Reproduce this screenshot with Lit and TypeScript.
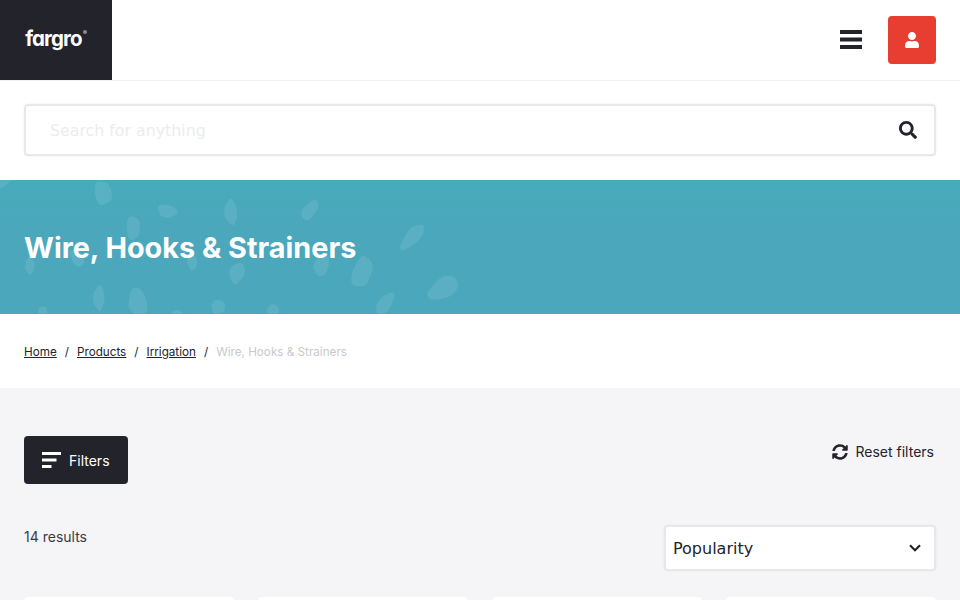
import { LitElement, html, css, svg } from "lit";
import { customElement } from "lit/decorators.js";

const blobs: [number, number, number, number, number][] = [
  [103, 193, 9, 13, -10], [167, 211, 10, 7, 15], [231, 212, 7, 13, -5], [310, 210, 7, 12, 40],
  [133, 228, 7, 13, 0], [412, 237, 7, 17, 40], [30, 265, 5, 10, 5], [77, 258, 6, 10, -30],
  [192, 262, 5, 9, -10], [237, 273, 8, 11, 15], [322, 265, 8, 12, 20], [362, 272, 10, 17, 20],
  [443, 288, 10, 18, 55], [99, 298, 6, 13, 0], [138, 302, 10, 15, -8], [218, 307, 7, 8, 0],
  [273, 311, 6, 7, -20], [385, 304, 7, 14, 35], [43, 311, 5, 5, 0], [3, 183, 8, 4, -30], [177, 313, 5, 3, 0],
];

function blobPath([x, y, rx, ry, rot]: [number, number, number, number, number], i: number): string {
  const n = 9;
  const r = (rot * Math.PI) / 180;
  const pts: [number, number][] = [];
  for (let k = 0; k < n; k++) {
    const a = (k / n) * Math.PI * 2;
    const w = 1 + 0.14 * Math.sin(k * 2.4 + i * 1.7);
    const px = Math.cos(a) * rx * w;
    const py = Math.sin(a) * ry * w;
    pts.push([x + px * Math.cos(r) - py * Math.sin(r), y + px * Math.sin(r) + py * Math.cos(r)]);
  }
  const mid = (a: [number, number], b: [number, number]) => `${((a[0] + b[0]) / 2).toFixed(1)} ${((a[1] + b[1]) / 2).toFixed(1)}`;
  let d = `M${mid(pts[n - 1], pts[0])}`;
  for (let k = 0; k < n; k++) {
    d += `Q${pts[k][0].toFixed(1)} ${pts[k][1].toFixed(1)} ${mid(pts[k], pts[(k + 1) % n])}`;
  }
  return d + "Z";
}

@customElement("app-root")
export class AppRoot extends LitElement {
  static styles = css`
    :host { display: block; height: 600px; overflow: hidden; background: #fff; font-family: Inter, "Liberation Sans", sans-serif; color: #22232b; }
    .header { height: 80px; display: flex; align-items: center; justify-content: space-between; box-shadow: 0 1px 0 #f0f0f1; }
    .logo { width: 112px; height: 80px; background: #22232b; display: flex; align-items: center; justify-content: center; flex: none; }
    .logo-text { font: 700 20.5px/1 Inter, sans-serif; font-feature-settings: "cv11"; color: #fff; letter-spacing: -0.9px; margin-top: -2px; }
    .logo-mark { width: 4px; height: 4px; border-radius: 50%; background: #8b8c93; margin: -17px 0 0 1px; }
    .actions { display: flex; align-items: center; gap: 26px; padding-right: 24px; }
    .bars { display: block; }
    .user { width: 48px; height: 48px; border-radius: 4px; background: #e83d31; display: flex; align-items: center; justify-content: center; }
    .search-wrap { padding: 24px; }
    .search { height: 52px; box-sizing: border-box; border: 2px solid #e8e8ea; border-radius: 4px; display: flex; align-items: center; justify-content: space-between; padding: 0 17px 0 24px; box-shadow: 0 0 2px rgba(0,0,0,.08); }
    .placeholder { font: 15.8px "DejaVu Sans", sans-serif; color: #ececef; }
    .hero { height: 134px; background: linear-gradient(#46abbb, #4ba8bc 30%); position: relative; display: flex; align-items: center; padding: 0 24px; overflow: hidden; }
    .hero svg { position: absolute; left: 0; top: 0; }
    .hero h1 { position: relative; margin: 2px 0 0; font: 700 28.8px/1.2 Inter, sans-serif; color: #fff; }
    .crumbs { height: 74px; box-sizing: border-box; display: flex; align-items: center; padding: 2px 24px 0; font-size: 11.7px; color: #22232b; }
    .crumbs a { color: inherit; text-decoration: underline; }
    .crumbs .sep { margin: 0 8px; }
    .crumbs .current { color: #c9c9cc; }
    .main { background: #f5f5f8; padding: 48px 24px; min-height: 300px; }
    .row1 { display: flex; justify-content: space-between; align-items: flex-start; }
    .filters { width: 104px; height: 48px; box-sizing: border-box; background: #22232b; color: #fff; border-radius: 4px; display: flex; align-items: center; gap: 8px; padding-left: 18px; font-size: 14px; }
    .reset { display: flex; align-items: center; gap: 8px; font-size: 14px; height: 31px; margin-right: 2px; }
    .row2 { display: flex; justify-content: space-between; align-items: flex-start; margin-top: 41px; }
    .count { font-size: 14px; line-height: 24px; color: #3a3b42; }
    .select { width: 272px; height: 46px; box-sizing: border-box; background: #fff; border: 2px solid #e8e8ea; border-radius: 4px; display: flex; align-items: center; justify-content: space-between; padding: 0 13px 0 7px; font: 16px "DejaVu Sans", sans-serif; color: #22232b; box-shadow: 0 0 2px rgba(0,0,0,.08); }
    .cards { display: grid; grid-template-columns: repeat(4, 1fr); gap: 24px; margin-top: 26px; }
    .card { height: 260px; background: #fff; border-radius: 4px; }
  `;

  render() {
    return html`
      <div class="header">
        <div class="logo"><span class="logo-text">fargro</span><span class="logo-mark"></span></div>
        <div class="actions">
          <svg class="bars" width="22" height="20" viewBox="0 0 22 20" fill="#22232b"><rect y="0" width="22" height="4"/><rect y="7.5" width="22" height="4"/><rect y="15" width="22" height="4"/></svg>
          <div class="user"><svg width="14" height="16" viewBox="0 0 448 512" fill="#fff"><path d="M224 256c70.7 0 128-57.3 128-128S294.7 0 224 0 96 57.3 96 128s57.3 128 128 128zm89.6 32h-16.7c-22.2 10.2-46.9 16-72.9 16s-50.6-5.8-72.9-16h-16.7C60.2 288 0 348.2 0 422.4V464c0 26.5 21.5 48 48 48h352c26.5 0 48-21.5 48-48v-41.6c0-74.2-60.2-134.4-134.4-134.4z"/></svg></div>
        </div>
      </div>
      <div class="search-wrap">
        <div class="search">
          <span class="placeholder">Search for anything</span>
          <svg width="18" height="18" viewBox="0 0 512 512" fill="#22232b"><path d="M505 442.7L405.3 343c-4.5-4.5-10.6-7-17-7H372c27.6-35.3 44-79.7 44-128C416 93.1 322.9 0 208 0S0 93.1 0 208s93.1 208 208 208c48.3 0 92.7-16.4 128-44v16.3c0 6.4 2.5 12.5 7 17l99.7 99.7c9.4 9.4 24.6 9.4 33.9 0l28.3-28.3c9.4-9.4 9.4-24.6.1-34zM208 336c-70.7 0-128-57.2-128-128 0-70.7 57.2-128 128-128 70.7 0 128 57.2 128 128 0 70.7-57.2 128-128 128z"/></svg>
        </div>
      </div>
      <div class="hero">
        <svg width="960" height="134" viewBox="0 180 960 134" fill="#fff" fill-opacity="0.09">
          ${blobs.map((b, i) => svg`<path d=${blobPath(b, i)}/>`)}
        </svg>
        <h1>Wire, Hooks &amp; Strainers</h1>
      </div>
      <div class="crumbs">
        <a>Home</a><span class="sep">/</span><a>Products</a><span class="sep">/</span><a>Irrigation</a><span class="sep">/</span><span class="current">Wire, Hooks &amp; Strainers</span>
      </div>
      <div class="main">
        <div class="row1">
          <div class="filters">
            <svg width="19" height="16" viewBox="0 0 19 16" fill="#fff"><rect width="19" height="3"/><rect y="6.5" width="14.5" height="3"/><rect y="13" width="9.5" height="3"/></svg>
            <span>Filters</span>
          </div>
          <div class="reset">
            <svg width="16" height="16" viewBox="0 0 512 512" fill="#22232b"><path d="M370.72 133.28C339.458 104.008 298.888 87.962 255.848 88c-77.458.068-144.328 53.178-162.791 126.85-1.344 5.363-6.122 9.15-11.651 9.15H24.103c-7.498 0-13.194-6.807-11.807-14.176C33.933 94.924 134.813 8 256 8c66.448 0 126.791 26.136 171.315 68.685L463.03 40.97C478.149 25.851 504 36.559 504 57.941V192c0 13.255-10.745 24-24 24H345.941c-21.382 0-32.09-25.851-16.971-40.971l41.75-41.749zM32 296h134.059c21.382 0 32.09 25.851 16.971 40.971l-41.75 41.75c31.262 29.273 71.835 45.319 114.876 45.28 77.418-.07 144.315-53.144 162.787-126.849 1.344-5.363 6.122-9.15 11.651-9.15h57.304c7.498 0 13.194 6.807 11.807 14.176C478.067 417.076 377.187 504 256 504c-66.448 0-126.791-26.136-171.315-68.685L48.97 471.03C33.851 486.149 8 475.441 8 454.059V320c0-13.255 10.745-24 24-24z"/></svg>
            <span>Reset filters</span>
          </div>
        </div>
        <div class="row2">
          <div class="count">14 results</div>
          <div class="select">
            <span>Popularity</span>
            <svg width="12" height="8" viewBox="0 0 12 8" fill="none" stroke="#22232b" stroke-width="2.2"><path d="M1 1.2l5 5 5-5"/></svg>
          </div>
        </div>
        <div class="cards"><div class="card"></div><div class="card"></div><div class="card"></div><div class="card"></div></div>
      </div>
    `;
  }
}
